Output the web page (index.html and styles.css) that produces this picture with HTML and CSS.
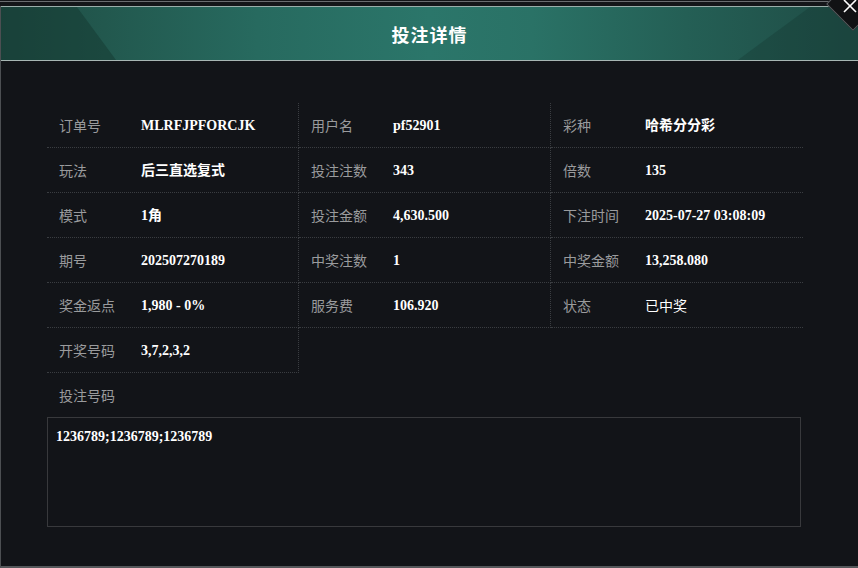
FILE: index.html
```html
<!DOCTYPE html>
<html lang="zh-CN">
<head>
    <meta charset="UTF-8">
    <meta name="viewport" content="width=device-width, initial-scale=1.0">
    <title>投注详情</title>
    <link rel="stylesheet" href="styles.css">
</head>
<body>
    <div class="topbar"></div>

    <div class="modal">
        <header class="modal-head">
            <h1>投注详情</h1>
        </header>

        <div class="close-btn" role="button" aria-label="关闭">
            <svg class="close-x" width="14" height="14" viewBox="0 0 14 14">
                <path d="M1 1 L13 13 M13 1 L1 13" stroke="#fff" stroke-width="1.6" fill="none"/>
            </svg>
        </div>

        <main class="modal-body">
            <div class="info-grid">
                <div class="cell"><span class="label">订单号</span><span class="value">MLRFJPFORCJK</span></div>
                <div class="cell"><span class="label">用户名</span><span class="value">pf52901</span></div>
                <div class="cell"><span class="label">彩种</span><span class="value">哈希分分彩</span></div>

                <div class="cell"><span class="label">玩法</span><span class="value">后三直选复式</span></div>
                <div class="cell"><span class="label">投注注数</span><span class="value">343</span></div>
                <div class="cell"><span class="label">倍数</span><span class="value">135</span></div>

                <div class="cell"><span class="label">模式</span><span class="value">1角</span></div>
                <div class="cell"><span class="label">投注金额</span><span class="value">4,630.500</span></div>
                <div class="cell"><span class="label">下注时间</span><span class="value">2025-07-27 03:08:09</span></div>

                <div class="cell"><span class="label">期号</span><span class="value">202507270189</span></div>
                <div class="cell"><span class="label">中奖注数</span><span class="value">1</span></div>
                <div class="cell"><span class="label">中奖金额</span><span class="value">13,258.080</span></div>

                <div class="cell"><span class="label">奖金返点</span><span class="value">1,980 - 0%</span></div>
                <div class="cell"><span class="label">服务费</span><span class="value">106.920</span></div>
                <div class="cell"><span class="label">状态</span><span class="value status">已中奖</span></div>

                <div class="cell"><span class="label">开奖号码</span><span class="value">3,7,2,3,2</span></div>
            </div>

            <div class="bet-label">投注号码</div>
            <div class="bet-box">1236789;1236789;1236789</div>
        </main>
    </div>
</body>
</html>
```

FILE: styles.css
```css
html, body {
    margin: 0;
    padding: 0;
    height: 100%;
    overflow: hidden;
}

body {
    background-color: #17191c;
    font-family: "Noto Sans CJK SC", "Noto Sans", sans-serif;
    color: #e0e0e0;
}

.topbar {
    height: 6px;
    background: linear-gradient(#141619 0 1px, #6a6d70 1px 2px, #141619 2px);
}

.modal {
    position: relative;
    height: 562px;
    box-sizing: border-box;
    background: #121418;
    border-left: 1px solid #4c4f52;
    border-bottom: 2px solid #55585b;
}

.modal-head {
    position: relative;
    height: 55px;
    box-sizing: border-box;
    border-top: 1px solid #9aaeaa;
    border-bottom: 1px solid #a7b6b3;
    background: linear-gradient(90deg, #1e4b43 0%, #22584e 12%, #276a5f 30%, #2b766a 50%, #2a7266 62%, #245f55 80%, #1f4c45 100%);
    display: flex;
    align-items: center;
    justify-content: center;
    overflow: hidden;
}

.modal-head::before {
    content: "";
    position: absolute;
    left: 0;
    top: 0;
    width: 115px;
    height: 100%;
    background: rgba(20, 55, 48, 0.5);
    clip-path: polygon(0 0, 66% 0, 100% 100%, 0 100%);
}

.modal-head::after {
    content: "";
    position: absolute;
    right: 0;
    top: 0;
    width: 120px;
    height: 100%;
    background: rgba(20, 55, 48, 0.35);
    clip-path: polygon(60% 0, 100% 0, 100% 100%, 0 100%);
}

.modal-head h1 {
    position: relative;
    z-index: 1;
    margin: 0;
    font-size: 18px;
    font-weight: 700;
    color: #ffffff;
    letter-spacing: 1px;
}

/* close button: a diamond hanging off the top-right corner */
.close-btn {
    position: absolute;
    top: -6px;
    right: 0;
    width: 32px;
    height: 34px;
    z-index: 3;
    cursor: pointer;
}

.close-btn::before {
    content: "";
    position: absolute;
    left: 8px;
    top: -15px;
    width: 36px;
    height: 36px;
    background: #111214;
    border: 1px solid #5b5e61;
    transform: rotate(45deg);
}

.close-x {
    position: absolute;
    left: 17px;
    top: -1px;
}

.modal-body {
    padding: 42px 0 0 46px;
}

.info-grid {
    display: grid;
    grid-template-columns: 252px 252px 252px;
    width: 756px;
}

.cell {
    display: flex;
    align-items: center;
    height: 45px;
    box-sizing: border-box;
    padding-left: 12px;
    border-bottom: 1px dotted #3a3d41;
}

.cell:nth-child(3n+1),
.cell:nth-child(3n+2) {
    border-right: 1px dotted #3a3d41;
}

.label {
    width: 82px;
    flex-shrink: 0;
    font-size: 14px;
    line-height: 20px;
    color: #9a9b9d;
}

.value {
    padding-top: 2px;
    font-family: "Liberation Serif", "Noto Sans CJK SC", serif;
    font-size: 14px;
    line-height: 20px;
    font-weight: 700;
    color: #ffffff;
}

.value.status {
    padding-top: 0;
    font-family: "Noto Sans CJK SC", sans-serif;
    font-weight: 400;
}

.bet-label {
    height: 44px;
    line-height: 44px;
    padding-left: 12px;
    font-size: 14px;
    color: #9a9b9d;
}

.bet-box {
    width: 754px;
    height: 110px;
    box-sizing: border-box;
    padding: 9px 8px;
    border: 1px solid #38393c;
    font-family: "Liberation Serif", serif;
    font-size: 14px;
    font-weight: 700;
    color: #ffffff;
    line-height: 20px;
}
```
